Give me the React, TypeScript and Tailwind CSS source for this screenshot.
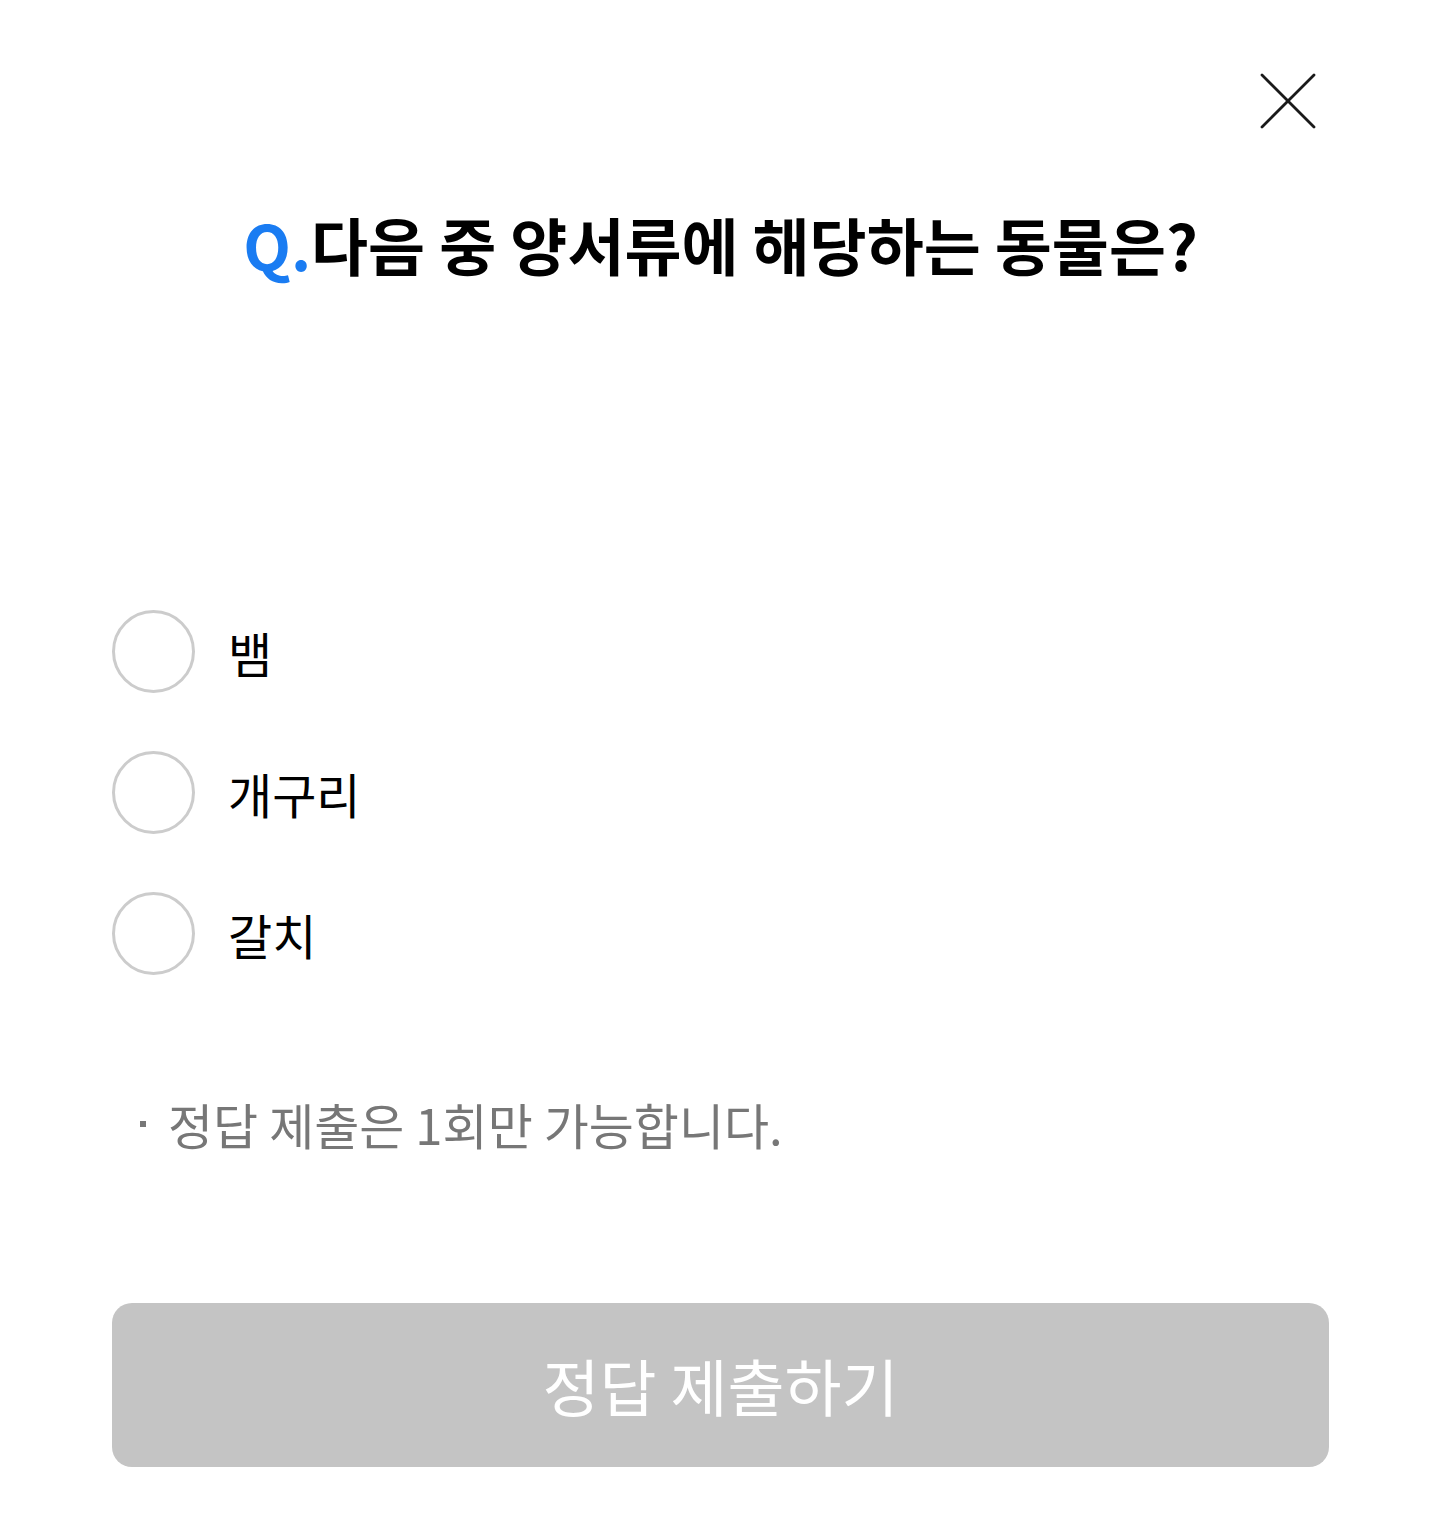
const options = ["뱀", "개구리", "갈치"];

function CloseIcon() {
  return (
    <svg width="56" height="56" viewBox="0 0 56 56" fill="none" aria-hidden>
      <path d="M2 2 L54 54 M54 2 L2 54" stroke="#1a1a1a" strokeWidth="2.8" strokeLinecap="round" />
    </svg>
  );
}

export default function App() {
  return (
    <div className="min-h-screen bg-white pl-[112px] pr-[110px] pb-[46px] font-['Noto_Sans_CJK_KR','Noto_Sans',sans-serif] text-black">
      <div className="flex justify-end pt-[73px] pr-[13px]">
        <button type="button" aria-label="닫기">
          <CloseIcon />
        </button>
      </div>

      <h1 className="mt-[67px] text-center text-[62px] font-bold leading-[96px]">
        <span className="text-[#1a7cf2]">Q.</span>다음 중 양서류에 해당하는 동물은?
      </h1>

      <ul className="mt-[318px] flex flex-col gap-[58px]">
        {options.map((label) => (
          <li key={label} className="flex items-center gap-[33px]">
            <span className="h-[83px] w-[83px] shrink-0 rounded-full border-[3px] border-[#cccccc]" />
            <span className="text-[48px] leading-[82px]">{label}</span>
          </li>
        ))}
      </ul>

      <p className="mt-[117px] flex items-center pl-[28px] text-[49px] leading-[64px] text-[#777777]">
        <span className="mr-[22px] inline-block h-[6px] w-[6px] bg-[#777777]" />
        정답 제출은 1회만 가능합니다.
      </p>

      <button
        type="button"
        disabled
        className="mt-[147px] flex h-[164px] w-full items-center justify-center rounded-[20px] bg-[#c4c4c4] text-[62px] text-white"
      >
        정답 제출하기
      </button>
    </div>
  );
}
